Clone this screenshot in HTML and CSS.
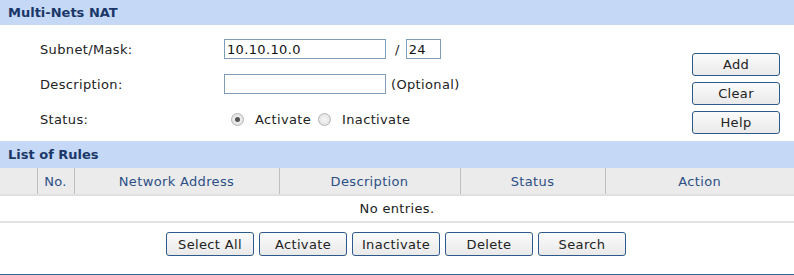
FILE: index.html
```html
<!DOCTYPE html>
<html>
<head>
<meta charset="utf-8">
<link rel="stylesheet" href="styles.css">
</head>
<body>
<div class="page">
  <div class="band">Multi-Nets NAT</div>
  <div class="form-area">
    <div class="form">
      <div class="row">
        <span class="label">Subnet/Mask:</span>
        <input class="txt wide" type="text" value="10.10.10.0">
        <span class="slash">/</span>
        <input class="txt mask" type="text" value="24">
      </div>
      <div class="row">
        <span class="label">Description:</span>
        <input class="txt wide" type="text" value="">
        <span class="opt">(Optional)</span>
      </div>
      <div class="row status">
        <span class="label">Status:</span>
        <span class="radio on"></span><span class="rlabel">Activate</span>
        <span class="radio"></span><span class="rlabel">Inactivate</span>
      </div>
    </div>
    <div class="side">
      <button class="btn side-btn">Add</button>
      <button class="btn side-btn">Clear</button>
      <button class="btn side-btn">Help</button>
    </div>
  </div>
  <div class="band band2">List of Rules</div>
  <table class="rules">
    <thead>
      <tr>
        <th class="c0"></th>
        <th class="c1">No.</th>
        <th class="c2">Network Address</th>
        <th class="c3">Description</th>
        <th class="c4">Status</th>
        <th class="c5">Action</th>
      </tr>
    </thead>
    <tbody>
      <tr><td colspan="6">No entries.</td></tr>
    </tbody>
  </table>
  <div class="actions">
    <button class="btn act">Select All</button>
    <button class="btn act">Activate</button>
    <button class="btn act">Inactivate</button>
    <button class="btn act">Delete</button>
    <button class="btn act">Search</button>
  </div>
  <div class="bottom-line"></div>
</div>
</body>
</html>
```

FILE: styles.css
```css
* { box-sizing: border-box; }
html, body { margin: 0; padding: 0; background: #fff; }
body {
  font-family: "DejaVu Sans", Verdana, sans-serif;
  font-size: 13px;
  letter-spacing: 0.35px;
  color: #1f1f1f;
  width: 794px;
  height: 275px;
  overflow: hidden;
}
.page { width: 794px; }
.band {
  height: 25px;
  background: #c5d9f7;
  color: #1b3768;
  font-weight: bold;
  font-size: 13px;
  letter-spacing: 0;
  line-height: 25px;
  padding-left: 8px;
}
.band2 {
  height: 27px;
  line-height: 27px;
}
.form-area {
  display: flex;
  height: 116px;
}
.form {
  flex: 1;
  padding-top: 14px;
  padding-left: 40px;
}
.row {
  display: flex;
  align-items: center;
  height: 20px;
  margin-bottom: 15px;
}
.row.status { margin-top: 9px; }
.label { width: 184px; color: #222; }
.txt {
  height: 20px;
  border: 1px solid #7f9db9;
  padding: 0 2px;
  font-family: "DejaVu Sans", Verdana, sans-serif;
  font-size: 13px;
  letter-spacing: 0.35px;
  color: #111;
  outline: none;
}
.wide { width: 162px; }
.mask { width: 35px; }
.slash { margin: 0 6px 0 9px; color: #222; }
.opt { margin-left: 5px; color: #222; }
.radio {
  width: 13px;
  height: 13px;
  border-radius: 50%;
  border: 1px solid #b5b5b5;
  background: radial-gradient(circle at 50% 50%, #f6f6f6, #dcdcdc);
  margin-left: 7px;
  margin-right: 11px;
  display: flex;
  align-items: center;
  justify-content: center;
}
.radio.on::after {
  content: "";
  width: 5px;
  height: 5px;
  border-radius: 50%;
  background: #555;
}
.rlabel { color: #222; margin-right: 0; }
.side {
  width: 102px;
  display: flex;
  flex-direction: column;
  padding-top: 28px;
  gap: 6px;
}
.btn {
  font-family: "DejaVu Sans", Verdana, sans-serif;
  font-size: 13px;
  letter-spacing: 0.35px;
  color: #222;
  border: 1px solid #2d5a8a;
  border-radius: 3px;
  background: linear-gradient(#fbfbfb, #e9e9e9);
  padding: 0;
  cursor: pointer;
}
.side-btn { width: 88px; height: 23px; }
.rules {
  width: 794px;
  border-collapse: collapse;
}
.rules th {
  height: 27px;
  background: #ebebeb;
  color: #2b4f86;
  font-weight: normal;
  font-size: 13px;
  border-left: 1px solid #c0c0c0;
  border-bottom: 2px solid #e0e0e0;
  padding: 0;
}
.rules th.c0 { border-left: none; width: 37px; }
.rules th.c1 { width: 37px; }
.rules th.c2 { width: 205px; }
.rules th.c3 { width: 181px; }
.rules th.c4 { width: 145px; }
.rules td {
  height: 27px;
  text-align: center;
  border-bottom: 2px solid #e3e3e3;
  padding: 0;
  color: #222;
}
.actions {
  display: flex;
  justify-content: center;
  padding-top: 9px;
  gap: 5px;
  padding-right: 2px;
  height: 51px;
}
.act { width: 88px; height: 24px; }
.bottom-line {
  height: 2px;
  background: #2e6a9a;
}
```
